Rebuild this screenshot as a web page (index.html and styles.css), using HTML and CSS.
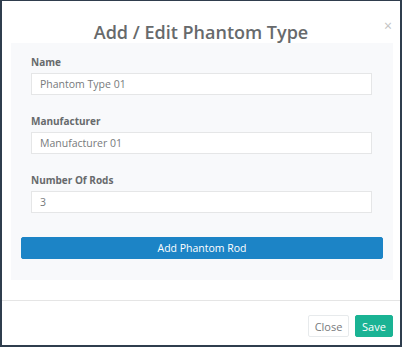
FILE: index.html
```html
<!DOCTYPE html>
<html lang="en">
<head>
  <meta charset="UTF-8">
  <title>Add / Edit Phantom Type</title>
  <link rel="stylesheet" href="styles.css">
</head>
<body>

  <!-- Fereastra modala -->
  <div class="modal">
    <div class="modal-header">
      <h1>Add / Edit Phantom Type</h1>
      <span class="close-x">&times;</span>
    </div>

    <div class="modal-body">
      <form class="panel">
        <div class="form-group">
          <label for="name">Name</label>
          <input type="text" id="name" value="Phantom Type 01">
        </div>
        <div class="form-group">
          <label for="manufacturer">Manufacturer</label>
          <input type="text" id="manufacturer" value="Manufacturer 01">
        </div>
        <div class="form-group">
          <label for="rods">Number Of Rods</label>
          <input type="text" id="rods" value="3">
        </div>
        <button type="button" class="btn btn-primary">Add Phantom Rod</button>
      </form>
    </div>

    <div class="modal-footer">
      <button type="button" class="btn btn-white">Close</button>
      <button type="button" class="btn btn-save">Save</button>
    </div>
  </div>

</body>
</html>
```

FILE: styles.css
```css
html, body {
  margin: 0;
  padding: 0;
  background-color: #ffffff;
}

body {
  font-family: "Open Sans", "Liberation Sans", sans-serif;
  color: #676a6c;
}

.modal {
  box-sizing: border-box;
  width: 402px;
  height: 347px;
  border-style: solid;
  border-color: #2f3d4d;
  border-width: 1px 2px 2px 2px;
  display: flex;
  flex-direction: column;
}

.modal-header {
  position: relative;
  padding-top: 20px;
  text-align: center;
}

.modal-header h1 {
  margin: 0;
  font-size: 18px;
  line-height: 22px;
  font-weight: 600;
  color: #676a6c;
}

.close-x {
  position: absolute;
  top: 18px;
  right: 8px;
  font-size: 14px;
  line-height: 14px;
  color: #c2c2c2;
}

.modal-body {
  padding: 0 7px 0 9px;
}

.panel {
  margin: 0;
  background-color: #f8f9fb;
  padding: 12px 10px 21px 10px;
}

.form-group {
  padding: 0 11px 0 10px;
  margin-bottom: 19px;
}

.form-group label {
  display: block;
  font-size: 10px;
  line-height: 14px;
  font-weight: 700;
  margin-bottom: 4px;
  color: #676a6c;
}

.form-group input {
  box-sizing: border-box;
  display: block;
  width: 100%;
  height: 22px;
  padding: 0 8px;
  border: 1px solid #e5e6e7;
  background-color: #ffffff;
  color: #777a7c;
  font-family: inherit;
  font-size: 10.5px;
}

.btn {
  box-sizing: border-box;
  height: 22px;
  border-radius: 2px;
  font-family: inherit;
  font-size: 10.5px;
  cursor: pointer;
}

.btn-primary {
  display: block;
  width: 100%;
  margin-top: 24px;
  background-color: #1c84c6;
  border: 1px solid #1c84c6;
  color: #ffffff;
}

.modal-footer {
  margin-top: 20px;
  border-top: 1px solid #e5e5e5;
  padding: 14px 7px 0 0;
  display: flex;
  justify-content: flex-end;
  gap: 6px;
}

.btn-white {
  width: 41px;
  padding: 0;
  font-size: 11px;
  background-color: #ffffff;
  border: 1px solid #e7eaec;
  color: #777a7c;
}

.btn-save {
  width: 38px;
  padding: 0;
  font-size: 11px;
  background-color: #1ab394;
  border: 1px solid #1ab394;
  color: #ffffff;
}
```
